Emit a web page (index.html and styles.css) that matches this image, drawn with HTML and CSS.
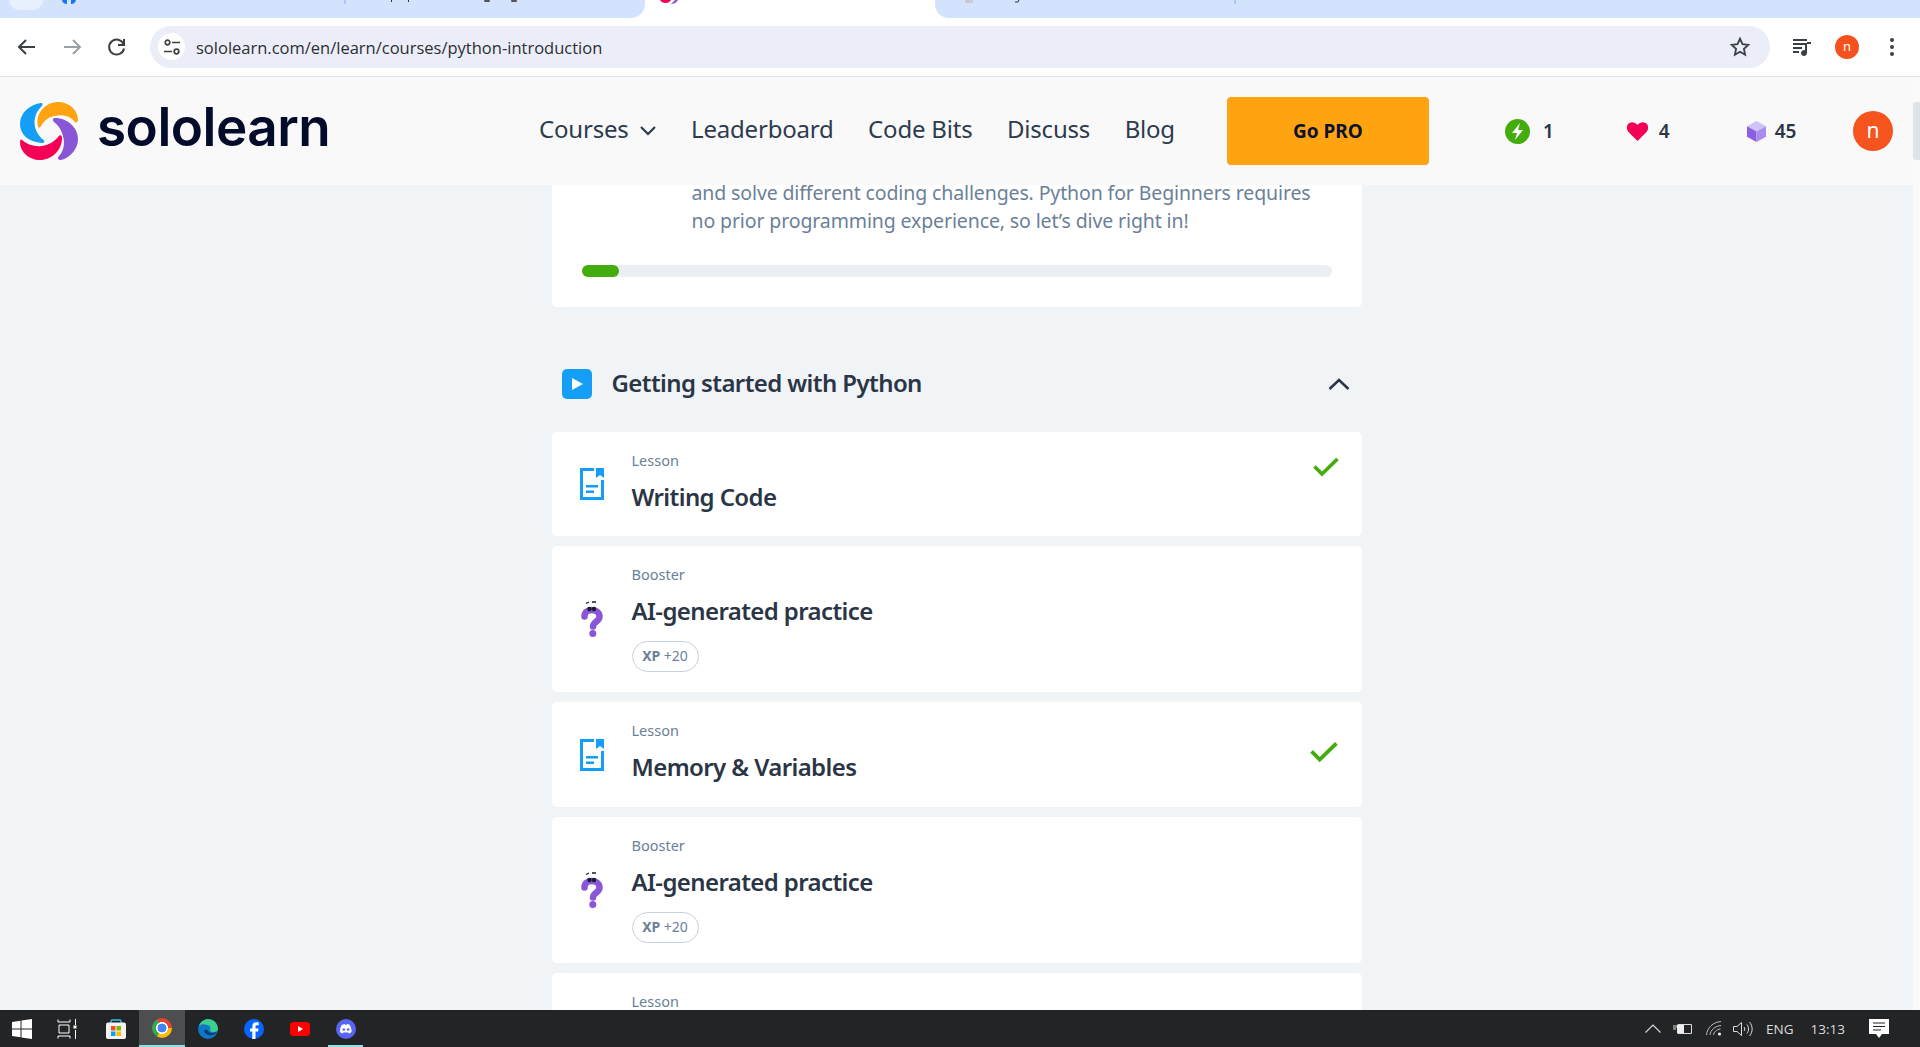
FILE: index.html
```html
<!DOCTYPE html>
<html lang="en">

<head>
    <meta charset="UTF-8">
    <title>Sololearn - Python Introduction</title>
    <link rel="stylesheet" href="styles.css">
</head>

<body>
    <!-- browser tabs, cut off at the top of the screen -->
    <div class="tabstrip">
        <div class="strip strip-left">
            <svg width="645" height="18" viewBox="0 0 645 18">
                <path d="M62 0h5v4a5 5 0 0 1-5-4zM71 0h5a5 5 0 0 1-5 4z" fill="#1877f2" />
                <rect x="344" width="2" height="4" fill="#a8c7fa" />
                <rect x="391" width="1" height="2" fill="#333" />
                <rect x="408" width="1" height="2" fill="#333" />
                <rect x="484" width="6" height="2" rx="1" fill="#555" />
                <rect x="511" width="6" height="2" rx="1" fill="#555" />
            </svg>
            <span class="new-pill"></span>
        </div>
        <div class="tab-active">
            <svg width="20" height="5" viewBox="0 0 20 5">
                <path d="M0 0h11a6 5 0 0 1-11 0z" fill="#f50057" />
                <path d="M11 4l4-4h3a8 8 0 0 1-7 4z" fill="#8a56d8" />
            </svg>
        </div>
        <div class="strip strip-right">
            <svg width="400" height="18" viewBox="0 0 400 18">
                <rect x="30" width="8" height="3" rx="1" fill="#c5c9d0" />
                <path d="M80 2h3l1-2" fill="none" stroke="#333" />
                <rect x="299" width="2" height="4" fill="#a8c7fa" />
            </svg>
        </div>
    </div>

    <div class="toolbar">
        <svg class="tool-icon" viewBox="0 0 24 24" fill="none" stroke="#3c4043" stroke-width="2">
            <path d="M20 12H5M11 5l-7 7 7 7" />
        </svg>
        <svg class="tool-icon" viewBox="0 0 24 24" fill="none" stroke="#9aa0a6" stroke-width="2">
            <path d="M4 12h15M13 5l7 7-7 7" />
        </svg>
        <svg class="tool-icon" viewBox="0 0 24 24" fill="none" stroke="#3c4043" stroke-width="2">
            <path d="M18.500 9a7.500 7.500 0 1 0 .5 4.500" />
            <path d="M19 4v6h-6" />
        </svg>
        <div class="omnibox">
            <span class="tune">
                <svg width="18" height="18" viewBox="0 0 18 18" fill="none" stroke="#3c4043" stroke-width="1.700">
                    <circle cx="4.500" cy="4.500" r="2.300" />
                    <path d="M9 4.500h8M1 13.500h8" />
                    <circle cx="13.500" cy="13.500" r="2.300" />
                </svg>
            </span>
            <span class="url">sololearn.com/en/learn/courses/python-introduction</span>
            <svg class="star" width="22" height="22" viewBox="0 0 24 24" fill="none" stroke="#3c4043" stroke-width="2">
                <path d="M12 3l2.700 6 6.300.7-4.700 4.300 1.300 6.500-5.600-3.300-5.600 3.300L7.700 14 3 9.700 9.300 9z" />
            </svg>
        </div>
        <svg class="media" width="22" height="22" viewBox="0 0 22 22" fill="#3c4043">
            <path d="M2 3h14v2H2zM2 7h14v2H2zM2 11h9v2H2zM2 15h6v2H2zM14 9h2v8a3 3 0 1 1-2-2.800zM16 6h4v2h-4z" />
        </svg>
        <span class="chrome-avatar">n</span>
        <svg class="dots" width="6" height="20" viewBox="0 0 6 20" fill="#3c4043">
            <circle cx="3" cy="3" r="2" />
            <circle cx="3" cy="10" r="2" />
            <circle cx="3" cy="17" r="2" />
        </svg>
    </div>

    <div class="page">
        <div class="content">
            <header class="site-header">
                <svg class="logo" width="58" height="58" viewBox="0 0 58 58">
                    <path d="M21 1C8 3 0 12 0 22c0 10 8 18 22 19 2.500 0 3-2 1.500-3C17 33 13 24 15 16c1-5 3-8 6-11 2-2 2-4 0-4z" fill="#149ef5" />
                    <path d="M18 24C15 12 25 0 38 0c11 0 20 8 20 18 0 3-3 3-4 1-4-5-12-7-19-5-7 1-11 5-14 10-1 2-3 2-3 0z" fill="#ffa310" />
                    <path d="M35 16c13 0 23 10 23 21 0 10-8 19-17 21-3 0-4-2-2-4 5-5 6-13 4-20-2-7-5-11-9-14-2-2-1-4 1-4z" fill="#8a56d8" />
                    <path d="M2 38c6 5 13 7 20 6 7-1 13-5 16-9 2-3 4-2 4 1 0 12-10 22-22 22C9 58 0 50 0 40c0-2 1-3 2-2z" fill="#f50057" />
                </svg>
                <span class="logo-text">sololearn</span>
                <nav class="nav">
                    <a class="nav-link">Courses
                        <svg class="nav-chevron" width="18" height="12" viewBox="0 0 18 12" fill="none" stroke="#2d3b4e" stroke-width="2.200">
                            <path d="M2 2l7 7 7-7" />
                        </svg>
                    </a>
                    <a class="nav-link">Leaderboard</a>
                    <a class="nav-link">Code Bits</a>
                    <a class="nav-link">Discuss</a>
                    <a class="nav-link">Blog</a>
                </nav>
                <button class="go-pro">Go PRO</button>
                <div class="stat stat-streak">
                    <svg width="25" height="25" viewBox="0 0 25 25">
                        <circle cx="12.500" cy="12.500" r="12.500" fill="#44ac0c" />
                        <path d="M15 4l-8 10h5l-2 7 8-10h-5z" fill="#fff" />
                    </svg>
                    <span>1</span>
                </div>
                <div class="stat stat-hearts">
                    <svg width="21" height="19" viewBox="0 0 21 19">
                        <path d="M10.500 19L1.500 10C-1 7-.5 3 2 1.300 4.500-.5 8 0 10.500 3 13 0 16.500-.5 19 1.300c2.500 1.700 3 5.700.5 8.700z" fill="#f50057" />
                    </svg>
                    <span>4</span>
                </div>
                <div class="stat stat-bits">
                    <svg width="19" height="21" viewBox="0 0 19 21">
                        <path d="M9.500 0L19 5.300 9.500 10.500 0 5.300z" fill="#cfc3f5" />
                        <path d="M0 5.300l9.500 5.200V21L0 15.700z" fill="#8a5fe0" />
                        <path d="M19 5.300l-9.500 5.200V21l9.500-5.300z" fill="#a98cf0" />
                    </svg>
                    <span>45</span>
                </div>
                <span class="avatar">n</span>
            </header>

            <main class="main">
                <section class="course">
                    <div class="intro">
                        <p class="intro-text">and solve different coding challenges. Python for Beginners requires<br>no prior programming experience, so let’s dive right in!</p>
                        <div class="progress">
                            <div class="progress-fill" style="width: 5%"></div>
                        </div>
                    </div>

                    <div class="module-head">
                        <span class="play">
                            <svg width="14" height="14" viewBox="0 0 14 14"><path d="M2 1l11 6-11 6z" fill="#fff" /></svg>
                        </span>
                        <h2 class="module-title">Getting started with Python</h2>
                        <svg class="module-chevron" width="22" height="12" viewBox="0 0 22 12" fill="none" stroke="#2a3546" stroke-width="2.500">
                            <path d="M1.500 11L11 2l9.500 9" />
                        </svg>
                    </div>

                    <div class="row row-lesson">
                        <svg class="row-icon" width="24" height="32" viewBox="0 0 24 32">
                            <use href="#doc" />
                        </svg>
                        <div class="row-body">
                            <div class="row-label">Lesson</div>
                            <div class="row-title">Writing Code</div>
                        </div>
                        <svg class="check" width="26" height="20" viewBox="0 0 26 20" fill="none" stroke="#44ac0c" stroke-width="3.600">
                            <path d="M1.500 9.500L9 17 24.500 2" />
                        </svg>
                    </div>

                    <div class="row row-booster">
                        <svg class="row-icon" width="24" height="36" viewBox="0 0 24 36">
                            <use href="#quiz" />
                        </svg>
                        <div class="row-body">
                            <div class="row-label">Booster</div>
                            <div class="row-title">AI-generated practice</div>
                            <span class="xp"><b>XP</b> +20</span>
                        </div>
                    </div>

                    <div class="row row-lesson row-wide">
                        <svg class="row-icon" width="24" height="32" viewBox="0 0 24 32">
                            <use href="#doc" />
                        </svg>
                        <div class="row-body">
                            <div class="row-label">Lesson</div>
                            <div class="row-title">Memory &amp; Variables</div>
                        </div>
                        <svg class="check check-low" width="28" height="22" viewBox="0 0 26 20" fill="none" stroke="#44ac0c" stroke-width="3.600">
                            <path d="M1.500 9.500L9 17 24.500 2" />
                        </svg>
                    </div>

                    <div class="row row-booster">
                        <svg class="row-icon" width="24" height="36" viewBox="0 0 24 36">
                            <use href="#quiz" />
                        </svg>
                        <div class="row-body">
                            <div class="row-label">Booster</div>
                            <div class="row-title">AI-generated practice</div>
                            <span class="xp"><b>XP</b> +20</span>
                        </div>
                    </div>

                    <div class="row row-last">
                        <svg class="row-icon" width="24" height="32" viewBox="0 0 24 32">
                            <use href="#doc" />
                        </svg>
                        <div class="row-body">
                            <div class="row-label">Lesson</div>
                        </div>
                    </div>
                </section>
            </main>
        </div>
        <div class="scrollbar">
            <div class="scroll-thumb"></div>
        </div>
    </div>

    <footer class="taskbar">
        <div class="task task-start">
            <svg width="20" height="20" viewBox="0 0 20 20" fill="#fff">
                <path d="M0 3l8.500-1.300v7.700H0zM9.500 1.500L20 0v9.400H9.500zM0 10.500h8.500v7.800L0 17zM9.500 10.500H20V20L9.500 18.500z" />
            </svg>
        </div>
        <div class="task task-view">
            <svg width="20" height="20" viewBox="0 0 20 20" fill="none" stroke="#fff" stroke-width="1">
                <path d="M1 3V.5M13 3V.5M1 3h12M2 6h10v8H2zM1 17h12M1 17v2.500M13 17v2.500M18.500 0v6M18.500 11v9" />
                <rect x="16.500" y="6.500" width="3" height="3" fill="#fff" stroke="none" />
            </svg>
        </div>
        <div class="task">
            <svg width="20" height="20" viewBox="0 0 20 20">
                <path d="M5 4V2a1 1 0 0 1 1-1h8a1 1 0 0 1 1 1v2" fill="none" stroke="#35c1f1" stroke-width="1.300" />
                <rect y="3.500" width="20" height="16.500" rx="2" fill="#f2f2f2" />
                <rect x="5" y="7" width="4.500" height="4.500" fill="#f25022" />
                <rect x="10.500" y="7" width="4.500" height="4.500" fill="#7fba00" />
                <rect x="5" y="12.500" width="4.500" height="4.500" fill="#00a4ef" />
                <rect x="10.500" y="12.500" width="4.500" height="4.500" fill="#ffb900" />
            </svg>
        </div>
        <div class="task task-active">
            <span class="chrome-logo"></span>
        </div>
        <div class="task">
            <svg width="20" height="20" viewBox="0 0 20 20">
                <circle cx="10" cy="10" r="10" fill="#0f78c4" />
                <path d="M1 7C3 2 7 0 10 0c5 0 10 4 10 10 0 2-2 3-5 3-2 0-3-1-3-2 1-2 0-5-3-5C6 5 3 5 1 7z" fill="#3ccf8e" />
                <path d="M6 12c1 3 4 5 8 4 2 0 4-1 5-3-1 0-3 1-5 1-2 0-3-1-4-2-1-2-3-2-4 0z" fill="#0b3f75" />
            </svg>
        </div>
        <div class="task">
            <svg width="20" height="20" viewBox="0 0 20 20">
                <circle cx="10" cy="10" r="10" fill="#0866ff" />
                <path d="M11.500 20v-7.500h2.600l.5-3h-3.100V7.800c0-.9.4-1.600 1.700-1.600h1.500V3.500c-.7-.1-1.500-.2-2.300-.2-2.600 0-4 1.500-4 4.100v2.100H6v3h2.300V20z" fill="#fff" />
            </svg>
        </div>
        <div class="task">
            <svg width="20" height="14" viewBox="0 0 20 14">
                <rect width="20" height="14" rx="3.500" fill="#f00" />
                <path d="M8 4l5 3-5 3z" fill="#fff" />
            </svg>
        </div>
        <div class="task task-open">
            <svg width="20" height="20" viewBox="0 0 20 20">
                <circle cx="10" cy="10" r="10" fill="#5865f2" />
                <path d="M6.500 5.800c1-.4 2-.7 2.300-.7l.3.600h1.800l.3-.6c.3 0 1.300.3 2.300.7 1.400 2 2.200 4.600 2.100 7.300-.9.700-2 1.200-3 1.400l-.7-1.200c-1 .3-3.300.3-4.300 0l-.7 1.200c-1-.2-2.100-.7-3-1.400-.1-2.700.7-5.300 2.100-7.300z" fill="#fff" />
                <circle cx="7.800" cy="10.500" r="1.300" fill="#5865f2" />
                <circle cx="12.200" cy="10.500" r="1.300" fill="#5865f2" />
            </svg>
        </div>

        <div class="tray">
            <svg width="16" height="9" viewBox="0 0 16 9" fill="none" stroke="#ddd" stroke-width="1.100"><path d="M.5 8.500L8 1l7.500 7.500" /></svg>
            <svg class="tray-battery" width="20" height="12" viewBox="0 0 20 12" fill="none" stroke="#ddd">
                <path d="M4.500 1.500h14v9h-14" />
                <rect x="4" y="2" width="7" height="8" fill="#eee" stroke="none" />
                <path d="M0 6h3M1 2v3M3 2v3" />
            </svg>
            <svg class="tray-wifi" width="16" height="15" viewBox="0 0 16 15" fill="none" stroke="#bbb">
                <path d="M.5 14C1 7 7 1 15 .5M4 14c.5-5 5-9 11-9.500M7.500 14c.3-3 3-5.500 7-6" />
                <circle cx="13.500" cy="13" r="1.600" fill="#eee" stroke="none" />
            </svg>
            <svg class="tray-sound" width="20" height="16" viewBox="0 0 20 16" fill="none" stroke="#ddd">
                <path d="M.5 5.500H4L8.500 1.500v13L4 10.500H.5zM11 6c1 1 1 3 0 4M14 3.500c2 2.500 2 6.500 0 9M16.500 1c3.500 4 3.500 10 0 14" />
            </svg>
            <span class="tray-text tray-lang">ENG</span>
            <span class="tray-text tray-clock">13:13</span>
            <svg class="tray-note" width="20" height="20" viewBox="0 0 20 20">
                <path d="M0 0h20v15h-7l-3 4-3-4H0z" fill="#fff" />
                <path d="M4 4h12M4 7.500h12M4 11h8" stroke="#222" stroke-width="1" />
            </svg>
        </div>
    </footer>

    <!-- shared row icons -->
    <svg class="icon-defs" width="0" height="0">
        <symbol id="doc" viewBox="0 0 24 32">
            <path d="M14 1.500H1.500v29h21V12" fill="none" stroke="#149ef5" stroke-width="3" />
            <path d="M16 0h8v10l-4-3-4 3z" fill="#149ef5" />
            <path d="M6 17h12v2.500H6zM6 22.500h8V25H6z" fill="#149ef5" />
        </symbol>
        <symbol id="quiz" viewBox="0 0 24 36">
            <path d="M4.500 15.500c0-4 3-6.500 7-6.500 4.500 0 8 2.500 8 6.500 0 5-6.500 5.500-6.500 10" fill="none" stroke="#8a56d8" stroke-width="6.500" stroke-linecap="round" />
            <circle cx="12.800" cy="32.500" r="3.500" fill="#8a56d8" />
            <circle cx="9.500" cy="8" r="2.200" fill="#161b28" />
            <circle cx="14" cy="8" r="2.200" fill="#161b28" />
            <path d="M6 2.500l3-1.500M12 1h4" stroke="#161b28" stroke-width="1.300" fill="none" />
        </symbol>
    </svg>
</body>

</html>
```

FILE: styles.css
```css
* {
    box-sizing: border-box;
}

body {
    margin: 0;
    height: 1047px;
    overflow: hidden;
    display: flex;
    flex-direction: column;
    background-color: #fff;
    font-family: "Noto Sans", sans-serif;
}

/* browser chrome */
.tabstrip {
    height: 18px;
    display: flex;
    flex: none;
    background-color: #fff;
}

.strip {
    background-color: #d3e3fd;
    height: 18px;
    position: relative;
}

.strip svg {
    display: block;
}

.strip-left {
    width: 645px;
    border-bottom-right-radius: 14px;
}

.new-pill {
    position: absolute;
    left: 9px;
    top: 0;
    width: 34px;
    height: 10px;
    background-color: #e9f0fd;
    border-radius: 0 0 12px 12px;
}

.tab-active {
    width: 290px;
    padding-left: 15px;
    background-color: #fff;
}

.tab-active svg {
    display: block;
}

.strip-right {
    flex: 1;
    border-bottom-left-radius: 14px;
}

.toolbar {
    height: 59px;
    flex: none;
    display: flex;
    align-items: center;
    padding: 0 24px 1px 15px;
    background-color: #fff;
    border-bottom: 1px solid #e3e3e3;
}

.tool-icon {
    width: 24px;
    height: 24px;
    margin-right: 21px;
}

.omnibox {
    width: 1620px;
    height: 42px;
    margin-right: 21px;
    display: flex;
    align-items: center;
    padding-left: 8px;
    padding-right: 19px;
    background-color: #ebeef8;
    border-radius: 21px;
}

.tune {
    width: 27px;
    height: 27px;
    margin-right: 11px;
    display: flex;
    align-items: center;
    justify-content: center;
    background-color: #fff;
    border-radius: 50%;
}

.url {
    flex: 1;
    padding-top: 2px;
    font-family: "Open Sans", sans-serif;
    font-size: 16.500px;
    color: #2b2f33;
}

.media {
    margin-right: 22px;
}

.chrome-avatar {
    width: 24px;
    height: 24px;
    margin-right: 30px;
    border-radius: 50%;
    background-color: #f4511e;
    color: #fff;
    font-size: 13px;
    line-height: 23px;
    text-align: center;
}

/* page */
.page {
    flex: 1;
    min-height: 0;
    display: flex;
}

.content {
    flex: 1;
    min-width: 0;
    display: flex;
    flex-direction: column;
}

.scrollbar {
    width: 7px;
    background-color: #fafafa;
}

.scroll-thumb {
    margin-top: 25px;
    height: 58px;
    background-color: #dee3e8;
    border-radius: 3px 0 0 3px;
}

.site-header {
    height: 108px;
    flex: none;
    display: flex;
    align-items: center;
    padding-left: 20px;
    background-color: #f9f9f9;
}

.logo {
    flex: none;
}

.logo-text {
    margin-left: 19px;
    margin-right: 1px;
    margin-bottom: 8px;
    width: 230px;
    font-family: Inter, sans-serif;
    font-weight: 600;
    font-size: 53px;
    line-height: 60px;
    letter-spacing: -0.5px;
    color: #020b2a;
}

.nav {
    display: flex;
    align-items: center;
    gap: 34.500px;
    margin-left: 211px;
    margin-bottom: 5px;
}

.nav-link {
    display: flex;
    align-items: center;
    font-size: 24px;
    letter-spacing: -0.2px;
    line-height: 34px;
    color: #2d3b4e;
}

.nav-chevron {
    margin-left: 10px;
    margin-top: 4px;
}

.go-pro {
    width: 202px;
    height: 68px;
    margin-left: 52px;
    border: none;
    border-radius: 4px;
    background-color: #ffa310;
    font-family: "Noto Sans", sans-serif;
    font-size: 19px;
    font-weight: 700;
    color: #0b1230;
}

.stat {
    display: flex;
    align-items: center;
    gap: 13px;
    font-size: 19px;
    font-weight: 600;
    color: #2a3546;
}

.stat-streak {
    margin-left: 76px;
}

.stat-hearts {
    margin-left: 73px;
    gap: 11px;
}

.stat-bits {
    margin-left: 77px;
    gap: 9px;
}

.avatar {
    width: 40px;
    height: 40px;
    margin-left: auto;
    margin-right: 20px;
    border-radius: 50%;
    background-color: #f5541f;
    color: #fff;
    font-size: 21px;
    line-height: 38px;
    text-align: center;
}

.main {
    flex: 1;
    min-height: 0;
    overflow: hidden;
    background-color: #f1f4f7;
}

.course {
    width: 810px;
    margin: 0 auto;
}

.intro {
    padding: 0 30px 30px;
    background-color: #fff;
    border-radius: 0 0 5px 5px;
}

.intro-text {
    margin: -6px 0 0 110px;
    font-size: 19.500px;
    letter-spacing: -0.12px;
    line-height: 28px;
    color: #6b7f99;
}

.progress {
    height: 12px;
    margin-top: 30px;
    background-color: #ebeff3;
    border-radius: 6px;
}

.progress-fill {
    height: 100%;
    background-color: #44ac0c;
    border-radius: 6px;
}

.module-head {
    display: flex;
    align-items: center;
    height: 30px;
    margin: 62px 0 33px;
    padding: 0 12px 0 10px;
}

.play {
    width: 30px;
    height: 30px;
    display: flex;
    align-items: center;
    justify-content: center;
    background-color: #149ef5;
    border-radius: 5px;
}

.module-title {
    flex: 1;
    margin: 0 0 0 20px;
    padding-bottom: 4px;
    font-size: 24px;
    font-weight: 600;
    letter-spacing: -0.6px;
    color: #2a3546;
}

.row {
    display: flex;
    align-items: center;
    margin-bottom: 10px;
    padding-left: 28px;
    padding-right: 20px;
    background-color: #fff;
    border-radius: 5px;
}

.row-lesson {
    height: 104px;
}

.row-wide {
    height: 105px;
}

.row-booster {
    height: 146px;
}

/* only its top shows above the taskbar */
.row-last {
    height: 112px;
}

.row-icon {
    flex: none;
}

.row-body {
    flex: 1;
    align-self: flex-start;
    margin-left: 28px;
    padding-top: 19px;
}

.row-label {
    font-size: 14.500px;
    line-height: 18px;
    color: #6b7f99;
}

.row-title {
    margin-top: 10px;
    font-size: 24px;
    font-weight: 600;
    letter-spacing: -0.6px;
    line-height: 36px;
    color: #2a3546;
}

.check {
    align-self: flex-start;
    margin-top: 25px;
    margin-right: 3px;
}

.check-low {
    margin-top: 39px;
    margin-right: 4px;
}

.xp {
    display: inline-block;
    width: 67px;
    height: 31px;
    margin-top: 12px;
    border: 1px solid #c8d2dc;
    border-radius: 16px;
    font-size: 14px;
    line-height: 28px;
    color: #6b7f99;
    text-align: center;
}

.icon-defs {
    position: absolute;
}

/* windows taskbar */
.taskbar {
    height: 37px;
    flex: none;
    display: flex;
    background-color: #222425;
}

.task {
    width: 46px;
    height: 37px;
    display: flex;
    align-items: center;
    justify-content: center;
}

.task-start {
    width: 47px;
    justify-content: flex-start;
    padding-left: 12px;
}

.task-view {
    justify-content: flex-start;
    padding-left: 10px;
}

.task-active {
    background-color: #4c4e4f;
    border-bottom: 2px solid #8fe0e6;
}

.task-open {
    position: relative;
}

.task-open::after {
    content: "";
    position: absolute;
    left: 5px;
    right: 6px;
    bottom: 0;
    height: 2px;
    background-color: #8fe0e6;
}

.chrome-logo {
    width: 20px;
    height: 20px;
    border-radius: 50%;
    background:
        radial-gradient(circle, #4285f4 0 4.200px, #fff 4.700px 5.800px, transparent 6.200px),
        conic-gradient(#ea4335 0 90deg, #fbbc05 90deg 210deg, #34a853 210deg 330deg, #ea4335 330deg);
}

.tray {
    margin-left: auto;
    display: flex;
    align-items: center;
    padding-right: 31px;
}

.tray-battery {
    margin-left: 12px;
}

.tray-wifi {
    margin-left: 13px;
}

.tray-sound {
    margin-left: 11px;
}

.tray-text {
    font-family: "Open Sans", sans-serif;
    font-size: 13.500px;
    color: #dcdcdc;
}

.tray-lang {
    margin-left: 13px;
}

.tray-clock {
    margin-left: 17px;
}

.tray-note {
    margin-left: 24px;
}
```
